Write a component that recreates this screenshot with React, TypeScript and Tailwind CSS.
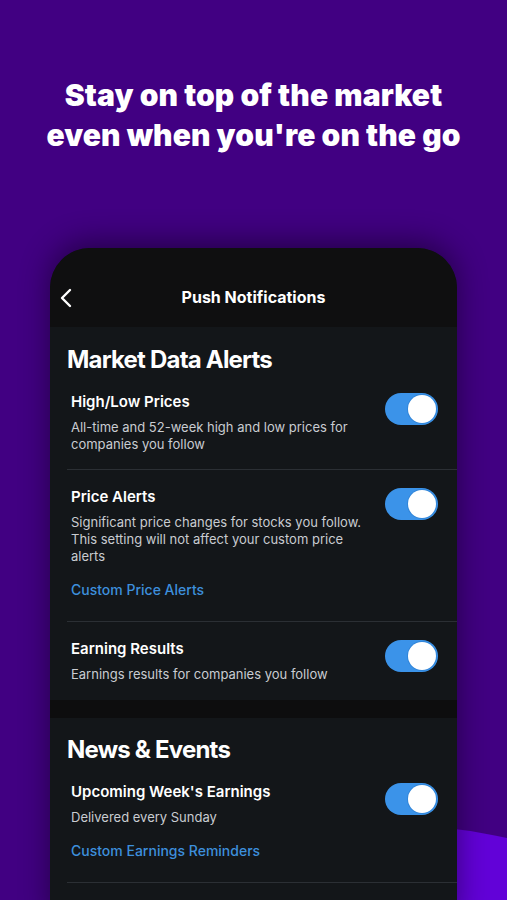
import { ReactNode } from 'react';

function Toggle() {
  return (
    <div className="mt-px flex h-[32px] w-[53px] shrink-0 items-center justify-end rounded-full bg-[#3b93e9] px-[2px]">
      <div className="h-[28px] w-[28px] rounded-full bg-white shadow-[0_0_0_1px_rgba(40,120,200,0.5)]" />
    </div>
  );
}

interface RowProps {
  title: string;
  desc: ReactNode;
  link?: string;
  divider?: boolean;
  pb: string;
}

function Row({ title, desc, link, divider = true, pb }: RowProps) {
  return (
    <div className={`ml-[17px] flex items-start pl-[4px] pr-[19px] pt-[17px] ${pb} ${divider ? 'border-b border-[#2b2f34]' : ''}`}>
      <div className="flex-1">
        <div className="text-[15px] font-semibold leading-[20px] text-white">{title}</div>
        <div className="mt-[7px] text-[13px] leading-[17px] text-[#c9ccd1]">{desc}</div>
        {link && (
          <div className="mt-[15px] text-[14px] font-medium leading-[20px] text-[#3d8fdc]">{link}</div>
        )}
      </div>
      <Toggle />
    </div>
  );
}

export default function App() {
  return (
    <div
      className="relative h-[900px] w-full overflow-hidden bg-[#410082]"
      style={{ fontFamily: 'Inter, "Noto Sans", sans-serif' }}
    >
      {/* bright wave behind the phone */}
      <div className="absolute left-[80px] top-[824px] h-[300px] w-[600px] rounded-[50%] bg-[#6202d8]" />

      <h1 className="relative pt-[75px] text-center text-[30px] font-black leading-[40px] tracking-[0.1px] text-white">
        Stay on top of the market
        <br />
        even when you're on the go
      </h1>

      <div className="relative mx-[50px] mt-[93px] overflow-hidden rounded-t-[40px] bg-[#131619] shadow-[0_-6px_30px_rgba(0,0,0,0.45)]">
        <header className="relative flex h-[79px] items-end justify-center bg-[#0f0f10] pb-[19px]">
          <svg
            className="absolute left-[9px] top-[40px]"
            width="14"
            height="20"
            viewBox="0 0 14 20"
            fill="none"
          >
            <polyline
              points="11,2 3,10 11,18"
              stroke="white"
              strokeWidth="2.4"
              strokeLinecap="round"
              strokeLinejoin="round"
            />
          </svg>
          <span className="text-[16px] font-bold leading-[22px] text-white">Push Notifications</span>
        </header>

        <section>
          <h2 className="pl-[17px] pt-[18px] text-[24px] font-bold leading-[30px] tracking-[-0.8px] text-white">
            Market Data Alerts
          </h2>
          <Row
            title="High/Low Prices"
            desc={
              <>
                All-time and 52-week high and low prices for
                <br />
                companies you follow
              </>
            }
            pb="pb-[16px]"
          />
          <Row
            title="Price Alerts"
            desc={
              <>
                Significant price changes for stocks you follow.
                <br />
                This setting will not affect your custom price
                <br />
                alerts
              </>
            }
            link="Custom Price Alerts"
            pb="pb-[21px]"
          />
          <Row
            title="Earning Results"
            desc="Earnings results for companies you follow"
            divider={false}
            pb="pb-[17px]"
          />
        </section>

        <div className="h-[18px] bg-[#0d0d0e]" />

        <section className="pb-[40px]">
          <h2 className="pl-[17px] pt-[17px] text-[24px] font-bold leading-[30px] tracking-[-0.8px] text-white">
            News &amp; Events
          </h2>
          <Row
            title="Upcoming Week's Earnings"
            desc="Delivered every Sunday"
            link="Custom Earnings Reminders"
            pb="pb-[21px]"
          />
        </section>
      </div>
    </div>
  );
}
